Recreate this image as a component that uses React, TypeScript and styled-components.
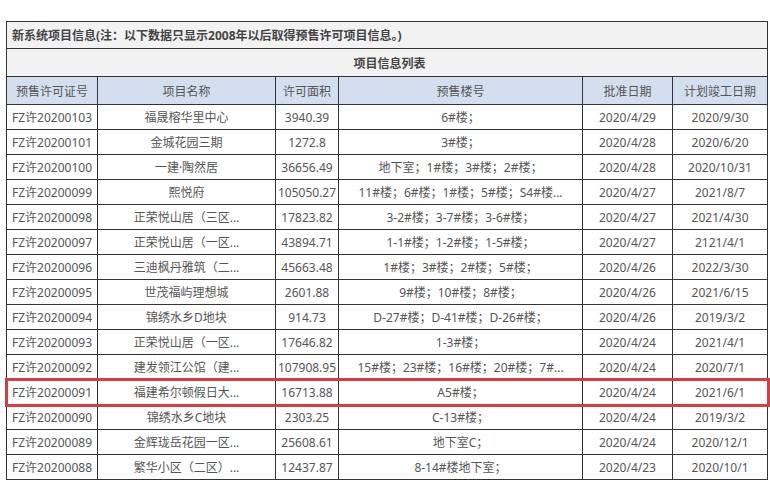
import React from "react";
import styled, { createGlobalStyle } from "styled-components";

const Global = createGlobalStyle`
  html, body { margin: 0; padding: 0; background: #fff; }
  body { font-family: "Noto Sans", "Noto Sans CJK SC", sans-serif; }
`;

const Page = styled.div`
  padding: 21px 0 0 6px;
  width: 770px;
  height: 482px;
  box-sizing: border-box;
  overflow: hidden;
`;

const Table = styled.table`
  width: 761px;
  border-collapse: collapse;
  table-layout: fixed;
  font-size: 12px;
  color: #555;
`;

const TitleCell = styled.td<{ $center?: boolean; $h: number }>`
  background: #f2f2f2;
  border: 1px solid #333;
  height: ${(p) => p.$h}px;
  padding: 0 0 0 5px;
  font-weight: bold;
  color: #444;
  text-align: ${(p) => (p.$center ? "center" : "left")};
  white-space: nowrap;
`;

const HeadCell = styled.th`
  background: #d3dfee;
  border: 1px solid #333;
  height: 27px;
  padding: 0;
  font-weight: normal;
  color: #555;
  text-align: center;
  white-space: nowrap;
`;

const Row = styled.tr<{ $hl?: boolean }>`
  outline: ${(p) => (p.$hl ? "3px solid #dc3a40" : "none")};
  outline-offset: -1px;
`;

const Cell = styled.td<{ $left?: boolean }>`
  border: 1px solid #333;
  height: 24px;
  padding: ${(p) => (p.$left ? "0 0 0 5px" : "0")};
  text-align: ${(p) => (p.$left ? "left" : "center")};
  white-space: nowrap;
  overflow: hidden;
  color: #555;
`;

const Track = styled.div`
  height: 3px;
  margin-top: 2px;
  display: flex;
`;

const Thumb = styled.div`
  margin-left: 361px;
  width: 46px;
  background: #c9c9c9;
`;

type R = [string, string, string, string, string, string];

const rows: R[] = [
  ["FZ许20200103", "福晟榕华里中心", "3940.39", "6#楼；", "2020/4/29", "2020/9/30"],
  ["FZ许20200101", "金城花园三期", "1272.8", "3#楼；", "2020/4/28", "2020/6/20"],
  ["FZ许20200100", "一建·陶然居", "36656.49", "地下室；1#楼；3#楼；2#楼；", "2020/4/28", "2020/10/31"],
  ["FZ许20200099", "熙悦府", "105050.27", "11#楼；6#楼；1#楼；5#楼；S4#楼...", "2020/4/27", "2021/8/7"],
  ["FZ许20200098", "正荣悦山居（三区...", "17823.82", "3-2#楼；3-7#楼；3-6#楼；", "2020/4/27", "2021/4/30"],
  ["FZ许20200097", "正荣悦山居（一区...", "43894.71", "1-1#楼；1-2#楼；1-5#楼；", "2020/4/27", "2121/4/1"],
  ["FZ许20200096", "三迪枫丹雅筑（二...", "45663.48", "1#楼；3#楼；2#楼；5#楼；", "2020/4/26", "2022/3/30"],
  ["FZ许20200095", "世茂福屿理想城", "2601.88", "9#楼；10#楼；8#楼；", "2020/4/26", "2021/6/15"],
  ["FZ许20200094", "锦绣水乡D地块", "914.73", "D-27#楼；D-41#楼；D-26#楼；", "2020/4/26", "2019/3/2"],
  ["FZ许20200093", "正荣悦山居（一区...", "17646.82", "1-3#楼；", "2020/4/24", "2021/4/1"],
  ["FZ许20200092", "建发领江公馆（建...", "107908.95", "15#楼；23#楼；16#楼；20#楼；7#...", "2020/4/24", "2020/7/1"],
  ["FZ许20200091", "福建希尔顿假日大...", "16713.88", "A5#楼；", "2020/4/24", "2021/6/1"],
  ["FZ许20200090", "锦绣水乡C地块", "2303.25", "C-13#楼；", "2020/4/24", "2019/3/2"],
  ["FZ许20200089", "金辉珑岳花园一区...", "25608.61", "地下室C；", "2020/4/24", "2020/12/1"],
  ["FZ许20200088", "繁华小区（二区）...", "12437.87", "8-14#楼地下室；", "2020/4/23", "2020/10/1"],
];

export default function App() {
  return (
    <Page>
      <Global />
      <Table>
        <colgroup>
          <col style={{ width: 91 }} />
          <col style={{ width: 178 }} />
          <col style={{ width: 63 }} />
          <col style={{ width: 244 }} />
          <col style={{ width: 90 }} />
          <col style={{ width: 95 }} />
        </colgroup>
        <tbody>
          <tr>
            <TitleCell colSpan={6} $h={26}>新系统项目信息(注：以下数据只显示2008年以后取得预售许可项目信息。)</TitleCell>
          </tr>
          <tr>
            <TitleCell colSpan={6} $center $h={27}>项目信息列表</TitleCell>
          </tr>
          <tr>
            <HeadCell>预售许可证号</HeadCell>
            <HeadCell>项目名称</HeadCell>
            <HeadCell>许可面积</HeadCell>
            <HeadCell>预售楼号</HeadCell>
            <HeadCell>批准日期</HeadCell>
            <HeadCell>计划竣工日期</HeadCell>
          </tr>
          {rows.map((r) => (
            <Row key={r[0]} $hl={r[0] === "FZ许20200091"}>
              <Cell $left>{r[0]}</Cell>
              <Cell>{r[1]}</Cell>
              <Cell>{r[2]}</Cell>
              <Cell>{r[3]}</Cell>
              <Cell>{r[4]}</Cell>
              <Cell>{r[5]}</Cell>
            </Row>
          ))}
        </tbody>
      </Table>
      <Track>
        <Thumb />
      </Track>
    </Page>
  );
}
